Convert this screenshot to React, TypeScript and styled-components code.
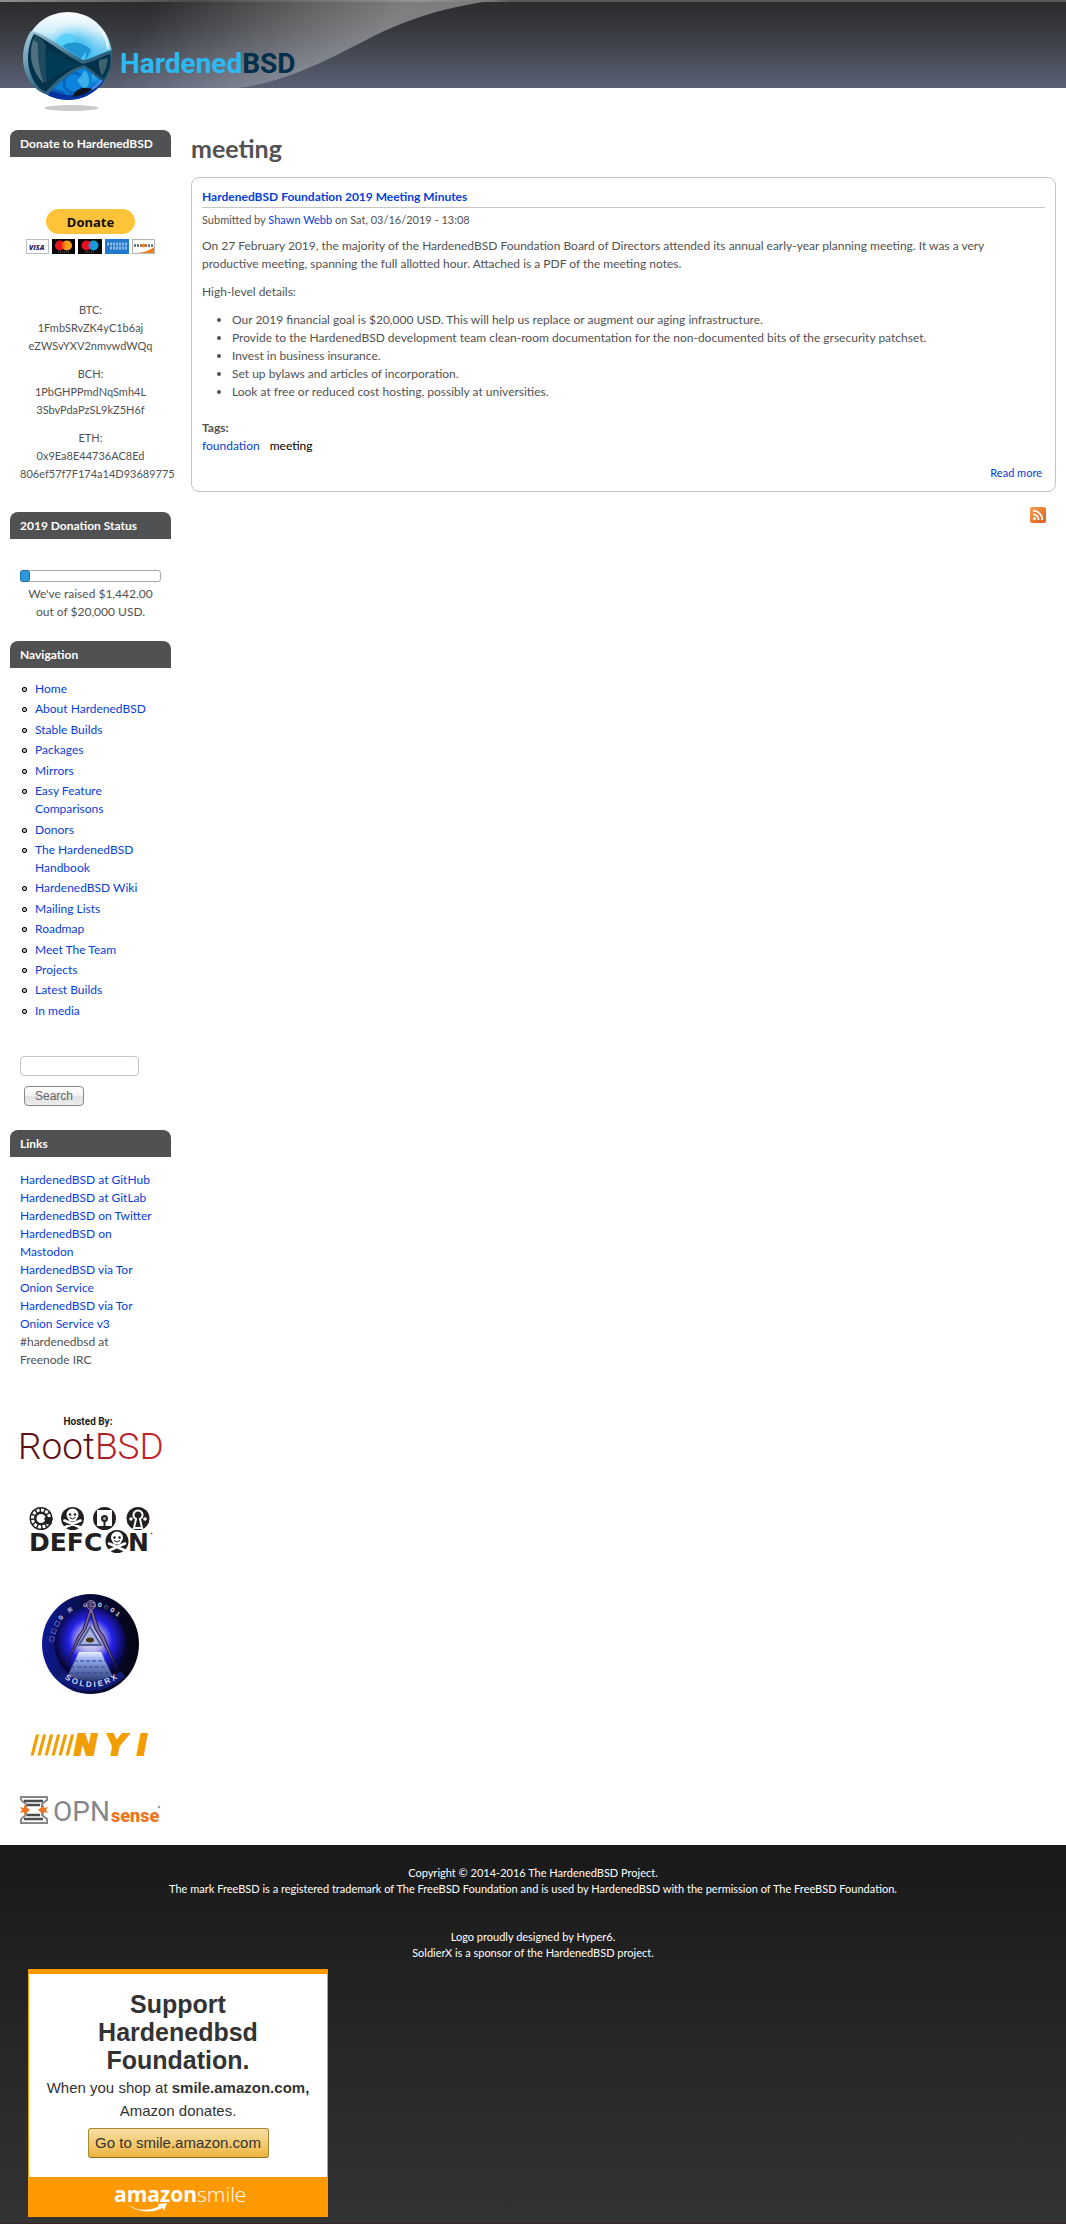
import React from "react";
import styled, { createGlobalStyle } from "styled-components";

const Global = createGlobalStyle`
  *, *::before, *::after { box-sizing: border-box; }
  body {
    margin: 0;
    background: #fff;
    color: #515253;
    font: 12px/18px Lato, "Open Sans", sans-serif;
  }
  a { color: #0540dc; text-decoration: none; }
  a:hover { text-decoration: underline; }
  p, ul, h1, h2, h3 { margin: 0; padding: 0; }
  svg { display: block; overflow: visible; }
`;

const Header = styled.header`
  position: relative;
  height: 88px;
  overflow: visible;
  background: linear-gradient(#2b2b2c, #35373b 30%, #5a6175);
`;

const Swoosh = styled.svg`
  position: absolute;
  left: 0;
  top: 0;
`;

const TopStrip = styled.div`
  position: absolute;
  inset: 0 0 auto 0;
  height: 2px;
  background: linear-gradient(90deg, #8e8f90, #4a4b4d 190px, #939494 420px, #77787a 490px, #55585a 510px, #55585a);
`;

const LogoLink = styled.a`
  position: absolute;
  left: 20px;
  top: 10px;
`;

const Columns = styled.div`
  display: grid;
  grid-template-columns: 161px minmax(0, 1fr);
  gap: 20px;
  padding: 42px 10px 21px;
`;

const Sidebar = styled.aside`
  display: flex;
  flex-direction: column;
`;

const BlockTitle = styled.h2`
  height: 27px;
  padding: 0 10px;
  border-radius: 8px 8px 0 0;
  background: #505153;
  color: #fff;
  font-size: 12px;
  line-height: 27px;
  font-weight: 700;
`;

const BlockBody = styled.div<{ $top: number; $bottom: number; $center?: boolean }>`
  padding: ${(p) => p.$top}px 10px ${(p) => p.$bottom}px;
  text-align: ${(p) => (p.$center ? "center" : "left")};
`;

const DonateForm = styled.form`
  display: flex;
  flex-direction: column;
  align-items: center;
  gap: 5px;
  margin-bottom: 47px;
`;

const DonateButton = styled.button`
  width: 89px;
  height: 25px;
  padding: 0;
  border: 0;
  border-radius: 13px;
  background: #ffc439;
  color: #111;
  font: 700 13px/24px "Noto Sans", sans-serif;
`;

const Address = styled.p`
  font-size: 11px;
  & + & { margin-top: 10px; }
`;

const Track = styled.div`
  height: 12px;
  margin-bottom: 3px;
  border: 1px solid #aaa;
  border-radius: 3px;
`;

const Fill = styled.div`
  height: 12px;
  margin: -1px;
  border: 1px solid #1f6fa3;
  border-radius: 3px;
  background: #2f97dd;
`;

const NavList = styled.ul`
  display: flex;
  flex-direction: column;
  justify-content: space-between;
  min-height: 340px;
  padding: 0 0 0 2px;
  list-style: none;
`;

const NavItem = styled.li`
  display: flex;
  gap: 8px;
  &::before {
    content: "";
    flex: none;
    width: 5px;
    height: 5px;
    margin-top: 7px;
    border: 1px solid #000;
    border-radius: 2px;
    background: #bbb;
  }
`;

const SearchForm = styled.form`
  display: flex;
  flex-direction: column;
  align-items: flex-start;
  gap: 10px;
  padding: 36px 10px 24px;
`;

const SearchInput = styled.input`
  width: 119px;
  height: 20px;
  border: 1px solid #c5c5c5;
  border-radius: 4px;
  background: #fff;
`;

const SearchButton = styled.button`
  width: 60px;
  height: 20px;
  margin-left: 4px;
  padding: 0;
  border: 1px solid #858585;
  border-radius: 4px;
  background: linear-gradient(#fff, #f2f2f2 50%, #e2e2e2 50%, #ececec);
  color: #666;
  font: 12px/18px "Liberation Sans", Arial, sans-serif;
`;

const Sponsors = styled.div`
  display: flex;
  flex-direction: column;
  align-items: center;
  padding: 0 10px;
  gap: 40px;
`;

const Main = styled.main`
  min-width: 0;
`;

const PageTitle = styled.h1`
  margin: 2px 0 13px;
  font-size: 25px;
  line-height: 32px;
  font-weight: 700;
`;

const Card = styled.article`
  padding: 10px;
  border: 1px solid #c5c5c5;
  border-radius: 8px;
`;

const CardTitle = styled.h2`
  padding-bottom: 1px;
  border-bottom: 1px solid #c5c5c5;
  font-size: 12px;
  line-height: 18px;
`;

const Submitted = styled.p`
  padding: 4px 0 9px;
  font-size: 11px;
  line-height: 16px;
`;

const Para = styled.p`
  margin-bottom: 10px;
  padding-right: 20px;
`;

const Bullets = styled.ul`
  margin-bottom: 18px;
  padding-left: 30px;
`;

const Tags = styled.div`
  display: flex;
  flex-wrap: wrap;
  gap: 0 10px;
`;

const TagsLabel = styled.h3`
  width: 100%;
  font-size: 12px;
  line-height: 18px;
`;

const CurrentTag = styled.a`
  color: #000;
`;

const ReadMore = styled.p`
  padding: 10px 3px 0;
  text-align: right;
  font-size: 11px;
  line-height: 16px;
`;

const FeedRow = styled.div`
  display: flex;
  justify-content: flex-end;
  padding: 15px 10px;
`;

const Footer = styled.footer`
  padding: 20px 28px 6px;
  border-bottom: 1px solid #302628;
  background: linear-gradient(#191919, #333);
  color: #fff;
  font-size: 11px;
  line-height: 16px;
`;

const FooterText = styled.p<{ $bottom: number }>`
  margin: 0 0 ${(p) => p.$bottom}px;
  text-align: center;
`;

const Smile = styled.section`
  width: 300px;
  border: 1px solid #ff9900;
  border-top-width: 5px;
  border-bottom: 0;
  background: #fff;
  color: #333;
  font-family: "Liberation Sans", Arial, sans-serif;
  text-align: center;
`;

const SmileTitle = styled.h2`
  padding: 16px 60px 2px;
  font-size: 25px;
  line-height: 28px;
`;

const SmileText = styled.p`
  margin-bottom: 6px;
  font-size: 15px;
  line-height: 23px;
`;

const SmileButton = styled.button`
  width: 181px;
  height: 30px;
  padding: 0;
  border: 1px solid #a88734;
  border-bottom-color: #8f6a1a;
  border-radius: 3px;
  background: linear-gradient(#f7dfa5, #eeb640);
  color: #333;
  font: 15px/26px "Liberation Sans", Arial, sans-serif;
`;

const SmileBar = styled.div`
  display: flex;
  justify-content: center;
  height: 40px;
  margin-top: 19px;
  background: #ff9900;
`;

const navigation = [
  "Home", "About HardenedBSD", "Stable Builds", "Packages", "Mirrors",
  "Easy Feature Comparisons", "Donors", "The HardenedBSD Handbook",
  "HardenedBSD Wiki", "Mailing Lists", "Roadmap", "Meet The Team",
  "Projects", "Latest Builds", "In media",
];

const links = [
  "HardenedBSD at GitHub", "HardenedBSD at GitLab", "HardenedBSD on Twitter",
  "HardenedBSD on Mastodon", "HardenedBSD via Tor Onion Service",
  "HardenedBSD via Tor Onion Service v3",
];

const addresses = [
  ["BTC:", "1FmbSRvZK4yC1b6aj", "eZWSvYXV2nmvwdWQq"],
  ["BCH:", "1PbGHPPmdNqSmh4L", "3SbvPdaPzSL9kZ5H6f"],
  ["ETH:", "0x9Ea8E44736AC8Ed", "806ef57f7F174a14D93689775"],
];

const goal = 20000;
const raised = 1442;

function SiteLogo() {
  return (
    <svg width="280" height="104" viewBox="20 10 280 104" role="img" aria-label="HardenedBSD">
      <defs>
        <linearGradient id="ball" x1="0" y1="0" x2="0" y2="1">
          <stop offset="0" stopColor="#fff" />
          <stop offset=".22" stopColor="#d4effa" />
          <stop offset=".5" stopColor="#4fc0ef" />
          <stop offset=".8" stopColor="#0d85dc" />
          <stop offset="1" stopColor="#042f96" />
        </linearGradient>
        <linearGradient id="rim" x1="0" y1="0" x2="1" y2="1">
          <stop offset="0" stopColor="#a9cfe0" />
          <stop offset=".5" stopColor="#386d88" />
          <stop offset="1" stopColor="#0d3c58" />
        </linearGradient>
        <radialGradient id="core" cx=".5" cy=".5" r=".5">
          <stop offset="0" stopColor="#48c8f8" />
          <stop offset=".5" stopColor="#43bdf0" stopOpacity=".8" />
          <stop offset="1" stopColor="#8edcf8" stopOpacity="0" />
        </radialGradient>
        <clipPath id="ballClip"><circle cx="68" cy="56" r="44" /></clipPath>
      </defs>
      <ellipse cx="71.500" cy="108" rx="27" ry="3" fill="#cacaca" />
      <circle cx="68" cy="56" r="44" fill="url(#ball)" />
      <g clipPath="url(#ballClip)">
        <ellipse cx="74" cy="56" rx="34" ry="34" fill="url(#core)" />
        <path d="M56 42c2-8 17-11 18-5 1 7-3 10-6 14z" fill="#59d0f9" />
        <path d="M62 46c9-6 22-4 29 4l-6 12z" fill="#2295d3" />
        <path d="M86 52l-7 9 6 2z" fill="#49c8fa" />
        <circle cx="76" cy="84" r="15" fill="#0871d2" />
        <circle cx="72" cy="83" r="10" fill="#1191e8" />
        <path d="M85 70c6 7 5 15 0 20l-8-9z" fill="#3aaee9" />
        <path d="M44 88q26 13 46 3l16-14-6 20-32 8-28-6z" fill="#0633a0" />
        <path d="M48 84q22 16 44 2V68H66z" fill="#0b82dc" />
        <circle cx="74" cy="83" r="10" fill="none" stroke="#0767bd" strokeWidth="3" />
        <path d="M85 70c6 7 5 15 0 20l-8-9z" fill="#3aaee9" />
        <path d="M72 97c4-9 12-11 20-8-5 5-12 7-20 8z" fill="#0c1520" />
        <path d="M92 89c8-5 11-10 12-14" fill="none" stroke="#4b8bdc" strokeWidth="2.500" />
      </g>
      <path d="M31 31C43 32 66 51 83 60c9-1 17-7 29-10 1 11-1 22-8 31-6-1-12-9-20-13-14 4-27 16-36 27-15-4-25-20-25-37 0-10 3-20 8-27z" fill="url(#rim)" />
      <path d="M34 34C45 38 68 57 83 64c10-2 18-7 27-10 1 9-1 17-6 24-6-2-12-9-20-13-14 3-30 17-38 27-11-4-18-20-18-33 0-9 2-19 6-25z" fill="#02314a" />
      <path d="M35 35c4 2 8 5 11 10-1 11 0 24 1 38-5-2-10-6-13-13-5-12-5-25 1-35z" fill="#1d4a5e" />
      <path d="M49 50q16 10 34 16-17 1-36 15-3-16 2-31z" fill="#013c56" />
      <path d="M33 40c-5 18 0 32 11 44-5-14-7-28-6-41z" fill="#6c8792" opacity=".65" />
      <path d="M99 60q-1 8 3 16 5-7 6-18z" fill="#3e6170" />
      <path d="M99 28c7 8 9 14 9 21" fill="none" stroke="#fff" strokeWidth="2.500" opacity=".7" />
      <text x="120" y="73" fontFamily="Roboto, sans-serif" fontWeight="700" fontSize="28" fill="#2bb9f2">
        Hardened<tspan fill="#022f49">BSD</tspan>
      </text>
    </svg>
  );
}

function PaymentCards() {
  return (
    <svg width="129" height="15" viewBox="0 0 129 15" role="img" aria-label="Visa, Mastercard, Maestro, American Express, Discover">
      <rect x=".5" y=".5" width="22" height="14" fill="#fff" stroke="#b9bec8" />
      <text x="3" y="11" fontFamily="Open Sans, sans-serif" fontStyle="italic" fontWeight="800" fontSize="7" fill="#1c2568">VISA</text>
      <rect x="26" width="23" height="15" fill="#050505" />
      <circle cx="34" cy="6.500" r="5" fill="#e8141d" /><circle cx="41" cy="6.500" r="5" fill="#f99c1c" />
      <path d="M37.500 3a5 5 0 0 1 0 7 5 5 0 0 1 0-7z" fill="#ff5a12" />
      <path d="M32 13h11" stroke="#777" strokeDasharray="1 1" />
      <rect x="52" width="24" height="15" fill="#050505" />
      <circle cx="60.500" cy="6.500" r="5" fill="#ea1020" /><circle cx="67.500" cy="6.500" r="5" fill="#129ddd" />
      <path d="M64 3a5 5 0 0 1 0 7 5 5 0 0 1 0-7z" fill="#6b6bc0" />
      <path d="M59 13h10" stroke="#777" strokeDasharray="1 1" />
      <rect x="79" width="24" height="15" fill="#2379cd" />
      <path d="M81 5h20M84 9h18" stroke="#c0dbf4" strokeWidth="3" strokeDasharray="2 1" opacity=".7" />
      <rect x="106.500" y=".5" width="22" height="14" fill="#fff" stroke="#b5b5b5" />
      <path d="M128 8v6h-17q11-1 17-6z" fill="#f58220" />
      <path d="M108 6.500h8m3 0h8" stroke="#666" strokeWidth="2.500" strokeDasharray="2 1" />
      <circle cx="117.500" cy="6.500" r="2" fill="#f58220" />
    </svg>
  );
}

function RssIcon() {
  return (
    <svg width="16" height="16" viewBox="0 0 16 16" role="img" aria-label="Subscribe to feed">
      <defs>
        <linearGradient id="rss" x1="0" y1="0" x2="1" y2="1">
          <stop offset="0" stopColor="#f5a04c" /><stop offset="1" stopColor="#dd5b1f" />
        </linearGradient>
      </defs>
      <rect width="16" height="16" rx="2" fill="url(#rss)" />
      <circle cx="4.500" cy="11.500" r="1.600" fill="#fff" />
      <path d="M3 7.300a5.700 5.700 0 0 1 5.700 5.700M3 3.600A9.400 9.400 0 0 1 12.400 13" fill="none" stroke="#fff" strokeWidth="1.800" />
    </svg>
  );
}

function RootBsdLogo() {
  return (
    <svg width="141" height="53" viewBox="20 1414 141 53" role="img" aria-label="Hosted by RootBSD">
      <defs>
        <linearGradient id="rootBsdRed" x1="20" x2="161" y1="0" y2="0" gradientUnits="userSpaceOnUse">
          <stop offset="0" stopColor="#5e1115" /><stop offset=".5" stopColor="#5f0d13" />
          <stop offset=".55" stopColor="#ab1d24" /><stop offset="1" stopColor="#c4222b" />
        </linearGradient>
      </defs>
      <text x="88" y="1425" textAnchor="middle" fontFamily="Roboto, sans-serif" fontWeight="700" fontSize="10" fill="#222">Hosted By:</text>
      <text x="18" y="1459" fontFamily="Roboto, sans-serif" fontWeight="300" fontSize="37" fill="url(#rootBsdRed)">RootBSD</text>
    </svg>
  );
}

function Skull({ x, y }: { x: number; y: number }) {
  return (
    <g transform={`translate(${x} ${y})`}>
      <circle r="11.500" fill="#231f20" />
      <path d="M-8 2L8 9M8 2L-8 9" stroke="#fff" strokeWidth="2.600" strokeLinecap="round" />
      <path d="M-6-4a6 6 0 0 1 12 0c0 3-2 4-3 7h-6c-1-3-3-4-3-7z" fill="#fff" />
      <circle cx="-2.500" cy="-4" r="1.300" fill="#231f20" /><circle cx="2.500" cy="-4" r="1.300" fill="#231f20" />
      <path d="M-3-1q3 3 6 0" fill="none" stroke="#231f20" />
    </g>
  );
}

function DefconLogo() {
  return (
    <svg width="121" height="47" viewBox="30 1507 121 47" role="img" aria-label="DEFCON">
      <circle cx="41" cy="1518.500" r="11.500" fill="#231f20" />
      <circle cx="41" cy="1518.500" r="8.500" fill="none" stroke="#fff" strokeWidth="3" strokeDasharray="3 1.500" pathLength="54" />
      <circle cx="41" cy="1518.500" r="4.500" fill="#fff" />
      <path d="M44 1518h9l-2 7-5-1z" fill="#231f20" />
      <Skull x={72.5} y={1518.5} />
      <circle cx="104.500" cy="1518.500" r="11.500" fill="#231f20" />
      <rect x="97" y="1510" width="15" height="16" fill="#fff" />
      <circle cx="104.500" cy="1518.500" r="3.500" fill="#231f20" /><circle cx="104.500" cy="1518.500" r="1.500" fill="#aaa" />
      <path d="M104.500 1521v6" stroke="#231f20" strokeWidth="2" />
      <circle cx="138" cy="1518.500" r="11.500" fill="#231f20" />
      <path d="M134 1528l2-9a4.500 4.500 0 1 1 4 0l2 9z" fill="none" stroke="#fff" strokeWidth="2" />
      <circle cx="131" cy="1519" r="1.800" fill="#fff" /><circle cx="145" cy="1519" r="1.800" fill="#fff" />
      <g fontFamily="DejaVu Sans, sans-serif" fontWeight="700" fontSize="25" fill="#231f20">
        <text x="29" y="1551">DEFC</text>
        <text x="128" y="1551">N</text>
      </g>
      <Skull x={117} y={1541.5} />
      <circle cx="151.500" cy="1533.500" r="1" fill="#777" />
    </svg>
  );
}

function SoldierxLogo() {
  return (
    <svg width="97" height="100" viewBox="42 1593 97 100" role="img" aria-label="SoldierX">
      <defs>
        <radialGradient id="sxGlow" cx=".5" cy=".45" r=".5">
          <stop offset="0" stopColor="#f0eeff" /><stop offset=".35" stopColor="#a8a3e6" />
          <stop offset=".6" stopColor="#2420e8" /><stop offset="1" stopColor="#06063a" />
        </radialGradient>
        <linearGradient id="sxRing" x1="0" x2="1" y1="0" y2="0">
          <stop offset="0" stopColor="#0e1a94" /><stop offset=".5" stopColor="#070b3a" /><stop offset="1" stopColor="#060412" />
        </linearGradient>
        <linearGradient id="sxBase" x1="0" x2="0" y1="0" y2="1">
          <stop offset="0" stopColor="#e8f0ff" /><stop offset=".3" stopColor="#8ba1e8" /><stop offset="1" stopColor="#26346c" />
        </linearGradient>
        <path id="sxTop" d="M53 1643a38 38 0 0 1 76 0v20" />
        <path id="sxBottom" d="M55 1668a45 45 0 0 0 72 0" />
      </defs>
      <ellipse cx="90.500" cy="1643" rx="48.500" ry="50" fill="url(#sxRing)" />
      <ellipse cx="90.500" cy="1643" rx="36" ry="37" fill="url(#sxGlow)" />
      <path d="M79 1651h22l12 25q-23 11-46 0z" fill="url(#sxBase)" />
      <path d="M74 1660h32M71 1666h38M69 1672h42" stroke="#334391" strokeDasharray="4 2" />
      <path d="M90 1626l11 18H79z" fill="#a9b3dc" stroke="#4f5d9a" strokeWidth="2" />
      <ellipse cx="90" cy="1639" rx="4" ry="2.500" fill="#43351f" />
      <path d="M91 1604l-8 24-5 7-12 28 15-27 5-8 5-16 4 16 5 8 17 32-13-33-5-7z" fill="#7a68a4" stroke="#1d1740" />
      <circle cx="91" cy="1604" r="4.500" fill="#443166" stroke="#8979b0" />
      <path d="M61 1671l5 2q24 14 50 0l5-3 4 6q-34 27-68 2z" fill="#101c78" />
      <text fontFamily="DejaVu Sans, sans-serif" fontWeight="700" fontSize="6" fill="#c8ccec">
        <textPath href="#sxTop" startOffset="2">{"□\u00a0□\u00a0□\u00a00\u00a0\u00a0\u00a0⌘\u00a0\u00a0\u00a0\u00a0\u00a0⌂\u00a0□\u00a00\u00a0◇\u00a00\u00a01"}</textPath>
      </text>
      <text fontFamily="Liberation Sans, sans-serif" fontWeight="700" fontSize="8" fill="#d6d8ef">
        <textPath href="#sxBottom" startOffset="50%" textAnchor="middle">S O L D I E R X</textPath>
      </text>
    </svg>
  );
}

function NyiLogo() {
  return (
    <svg width="121" height="22" viewBox="30 1734 121 22" role="img" aria-label="NYI">
      <g fill="#f29d00">
        {[0, 7, 14, 21, 28, 35].map((x) => (
          <path key={x} d={`M${36 + x} 1734.500h3.200l-5.500 21h-3.200z`} />
        ))}
        <g fontFamily="DejaVu Sans, sans-serif" fontStyle="italic" fontWeight="700" fontSize="28" stroke="#f29d00" strokeWidth="2">
          <text x="74" y="1755">N</text>
          <text x="106" y="1755">Y</text>
          <text x="137" y="1755">I</text>
        </g>
      </g>
    </svg>
  );
}

function OpnsenseLogo() {
  return (
    <svg width="141" height="28" viewBox="20 1797 141 28" role="img" aria-label="OPNsense">
      <path d="M21 1801v-3h26v3l-5 4v4M26 1809v-4l-5-4M21 1820v4h26v-4l-5-4v-3M26 1813v3l-5 4" fill="none" stroke="#85878b" strokeWidth="2" />
      <path d="M24 1802h19M27 1806h13M27 1816h13M24 1820h19" stroke="#4a4b4d" strokeWidth="2.500" />
      <path d="M20 1808l4 1v-3l6 5-6 5v-3l-4 1 2-3zM48 1808l-4 1v-3l-6 5 6 5v-3l4 1-2-3z" fill="#ee7623" />
      <text x="53" y="1822" fontFamily="Roboto, sans-serif" fontSize="28" fill="#85878b">OPN</text>
      <text x="111" y="1823" fontFamily="Roboto, sans-serif" fontWeight="900" fontSize="18" fill="#ee7623">sense</text>
      <circle cx="159" cy="1808" r="1.200" fill="#999" />
    </svg>
  );
}

function AmazonSmileLogo() {
  return (
    <svg width="140" height="40" viewBox="108 2177 140 40" role="img" aria-label="amazonsmile">
      <text x="114" y="2202" fontFamily="Open Sans, sans-serif" fontWeight="700" fontSize="21" fill="#fff">
        amazon<tspan fontWeight="300">smile</tspan>
      </text>
      <path d="M125 2203q17 12 34 3l-1-2 9-1-3 8-1-3q-20 9-38-5z" fill="#fff" />
    </svg>
  );
}

export default function App() {
  return (
    <>
      <Global />
      <Header>
        <Swoosh width="510" height="88" viewBox="0 0 510 88" aria-hidden="true">
          <defs>
            <linearGradient id="sweep" x1="150" y1="10" x2="350" y2="110" gradientUnits="userSpaceOnUse">
              <stop offset="0" stopColor="#fff" stopOpacity="0" />
              <stop offset=".65" stopColor="#fff" stopOpacity=".26" />
              <stop offset="1" stopColor="#fff" stopOpacity=".38" />
            </linearGradient>
          </defs>
          <path d="M0 0H500C445 6 405 20 368 39C325 61 287 82 237 88H0z" fill="url(#sweep)" />
        </Swoosh>
        <TopStrip />
        <LogoLink href="#home"><SiteLogo /></LogoLink>
      </Header>

      <Columns>
        <Sidebar>
          <section>
            <BlockTitle>Donate to HardenedBSD</BlockTitle>
            <BlockBody $top={52} $bottom={29} $center>
              <DonateForm onSubmit={(e) => e.preventDefault()}>
                <DonateButton type="submit">Donate</DonateButton>
                <PaymentCards />
              </DonateForm>
              {addresses.map(([name, first, second]) => (
                <Address key={name}>{name}<br />{first}<br />{second}</Address>
              ))}
            </BlockBody>
          </section>

          <section>
            <BlockTitle>2019 Donation Status</BlockTitle>
            <BlockBody $top={31} $bottom={20} $center>
              <Track role="progressbar" aria-label="Donations" aria-valuemin={0} aria-valuemax={goal} aria-valuenow={raised}>
                <Fill style={{ width: `${(raised / goal) * 100}%` }} />
              </Track>
              We've raised $1,442.00<br />out of $20,000 USD.
            </BlockBody>
          </section>

          <nav>
            <BlockTitle>Navigation</BlockTitle>
            <BlockBody $top={12} $bottom={0}>
              <NavList>
                {navigation.map((item) => (
                  <NavItem key={item}><a href="#nav">{item}</a></NavItem>
                ))}
              </NavList>
            </BlockBody>
          </nav>

          <SearchForm role="search" onSubmit={(e) => e.preventDefault()}>
            <SearchInput type="text" aria-label="Search" />
            <SearchButton type="submit">Search</SearchButton>
          </SearchForm>

          <section>
            <BlockTitle>Links</BlockTitle>
            <BlockBody $top={14} $bottom={45}>
              {links.map((item) => (
                <React.Fragment key={item}><a href="#link">{item}</a><br /></React.Fragment>
              ))}
              #hardenedbsd at Freenode IRC
            </BlockBody>
          </section>

          <Sponsors>
            <a href="#rootbsd"><RootBsdLogo /></a>
            <a href="#defcon"><DefconLogo /></a>
            <a href="#soldierx"><SoldierxLogo /></a>
            <a href="#nyi"><NyiLogo /></a>
            <a href="#opnsense"><OpnsenseLogo /></a>
          </Sponsors>
        </Sidebar>

        <Main>
          <PageTitle>meeting</PageTitle>
          <Card>
            <CardTitle><a href="#minutes">HardenedBSD Foundation 2019 Meeting Minutes</a></CardTitle>
            <Submitted>Submitted by <a href="#author">Shawn Webb</a> on Sat, 03/16/2019 - 13:08</Submitted>
            <Para>
              On 27 February 2019, the majority of the HardenedBSD Foundation Board of Directors attended its annual early-year planning meeting. It was a very productive meeting, spanning the full allotted hour. Attached is a PDF of the meeting notes.
            </Para>
            <Para>High-level details:</Para>
            <Bullets>
              <li>Our 2019 financial goal is $20,000 USD. This will help us replace or augment our aging infrastructure.</li>
              <li>Provide to the HardenedBSD development team clean-room documentation for the non-documented bits of the grsecurity patchset.</li>
              <li>Invest in business insurance.</li>
              <li>Set up bylaws and articles of incorporation.</li>
              <li>Look at free or reduced cost hosting, possibly at universities.</li>
            </Bullets>
            <Tags>
              <TagsLabel>Tags:</TagsLabel>
              <a href="#foundation">foundation</a>
              <CurrentTag href="#meeting">meeting</CurrentTag>
            </Tags>
            <ReadMore><a href="#more">Read more</a></ReadMore>
          </Card>
          <FeedRow><a href="#feed"><RssIcon /></a></FeedRow>
        </Main>
      </Columns>

      <Footer>
        <FooterText $bottom={32}>
          Copyright © 2014-2016 The HardenedBSD Project.<br />
          The mark FreeBSD is a registered trademark of The FreeBSD Foundation and is used by HardenedBSD with the permission of The FreeBSD Foundation.
        </FooterText>
        <FooterText $bottom={8}>
          Logo proudly designed by Hyper6.<br />
          SoldierX is a sponsor of the HardenedBSD project.
        </FooterText>
        <Smile>
          <SmileTitle>Support Hardenedbsd Foundation.</SmileTitle>
          <SmileText>When you shop at <b>smile.amazon.com,</b><br />Amazon donates.</SmileText>
          <SmileButton type="button">Go to smile.amazon.com</SmileButton>
          <SmileBar><AmazonSmileLogo /></SmileBar>
        </Smile>
      </Footer>
    </>
  );
}
